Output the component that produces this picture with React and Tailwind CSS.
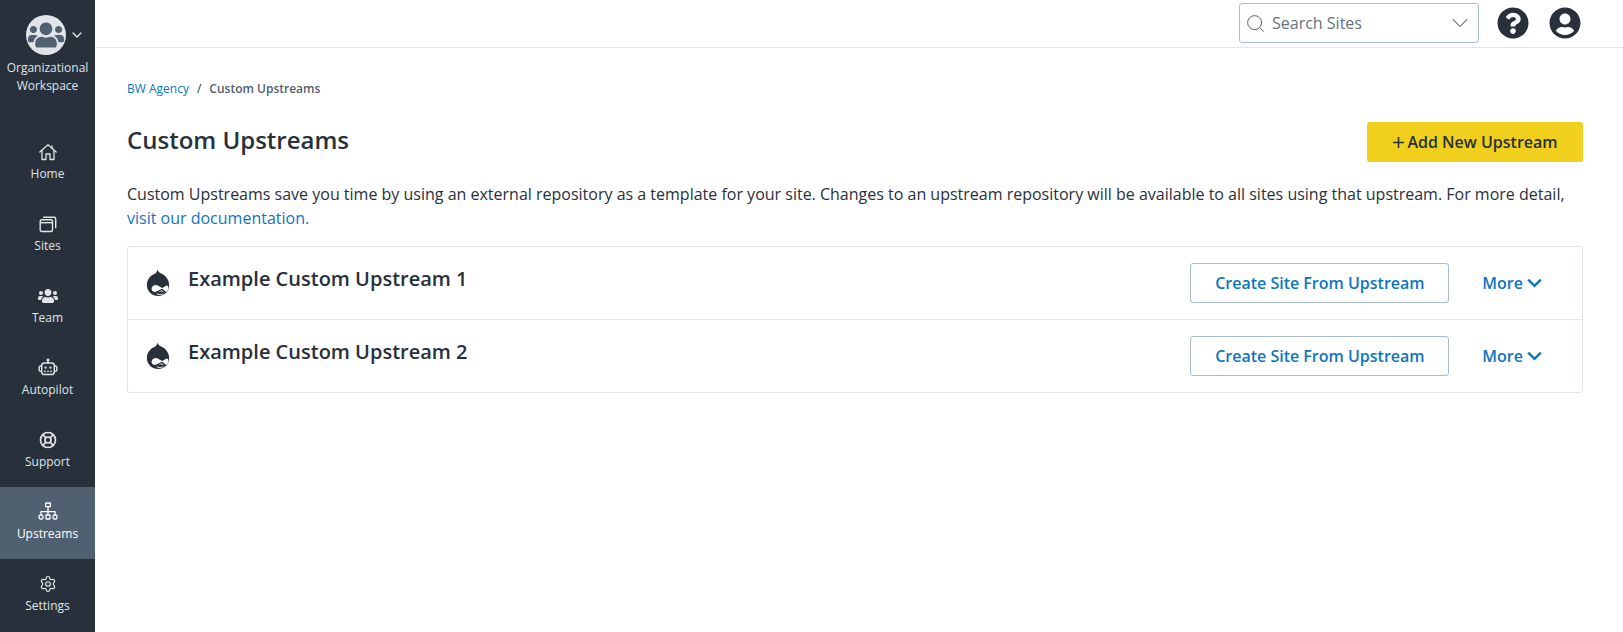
import React from "react";
import { FaDrupal, FaQuestionCircle, FaUserCircle, FaUsers } from "react-icons/fa";
import { Search, ChevronDown, Plus, LifeBuoy, Settings } from "lucide-react";

function SitesIcon() {
  return (
    <svg width="18" height="18" viewBox="0 0 18 18" fill="none" stroke="currentColor" strokeWidth="1.4">
      <rect x="1.2" y="4.7" width="12.3" height="11.8" rx="1.5" />
      <path d="M1.2 7.7h12.3" />
      <path d="M4.2 2.2h11a1.5 1.5 0 0 1 1.5 1.5v9.5" />
    </svg>
  );
}

function HomeIcon() {
  return (
    <svg width="18" height="18" viewBox="0 0 18 18" fill="none" stroke="currentColor" strokeWidth="1.3" strokeLinejoin="round" strokeLinecap="round">
      <path d="M0.8 9 9 1.8 17.2 9" />
      <path d="M3 7.5V16.5H7V11H11V16.5H15V7.5" />
      <path d="M13 3V5" />
    </svg>
  );
}

function BotIcon() {
  return (
    <svg width="20" height="20" viewBox="0 0 20 20" fill="none" stroke="currentColor" strokeWidth="1.4">
      <path d="M10 2v3" />
      <circle cx="10" cy="2" r="0.8" fill="currentColor" />
      <rect x="3.7" y="5" width="12.6" height="11.5" rx="2.6" />
      <path d="M3.7 8H2.6A1.4 1.4 0 0 0 1.2 9.4v2.6a1.4 1.4 0 0 0 1.4 1.4h1.1" />
      <path d="M16.3 8h1.1a1.4 1.4 0 0 1 1.4 1.4v2.6a1.4 1.4 0 0 1-1.4 1.4h-1.1" />
      <rect x="6.6" y="8.6" width="2" height="2" fill="currentColor" stroke="none" />
      <rect x="11.4" y="8.6" width="2" height="2" fill="currentColor" stroke="none" />
      <rect x="6.2" y="12.6" width="1.6" height="1.6" fill="currentColor" stroke="none" />
      <rect x="9.2" y="12.6" width="1.6" height="1.6" fill="currentColor" stroke="none" />
      <rect x="12.2" y="12.6" width="1.6" height="1.6" fill="currentColor" stroke="none" />
    </svg>
  );
}

function NetworkIcon() {
  return (
    <svg width="20" height="20" viewBox="0 0 20 20" fill="none" stroke="currentColor" strokeWidth="1.3">
      <rect x="7.6" y="1" width="4.8" height="3.6" rx="0.6" />
      <path d="M10 4.6v8" />
      <path d="M3 12.5V9.6h14v2.9" />
      <rect x="1" y="13" width="4" height="4" rx="1.6" />
      <rect x="8" y="13" width="4" height="4" rx="0.4" />
      <rect x="15" y="13" width="4" height="4" rx="1.6" />
    </svg>
  );
}

function Chev() {
  return (
    <svg width="15" height="10" viewBox="0 0 15 10" fill="none" stroke="currentColor" strokeWidth="2.4" className="ml-[4px]">
      <path d="M1.2 1.6 7.5 7.8 13.8 1.6" />
    </svg>
  );
}

const nav = [
  { label: "Home", icon: <HomeIcon /> },
  { label: "Sites", icon: <SitesIcon /> },
  { label: "Team", icon: <FaUsers size={20} /> },
  { label: "Autopilot", icon: <BotIcon /> },
  { label: "Support", icon: <LifeBuoy size={18} strokeWidth={2.2} /> },
  { label: "Upstreams", icon: <NetworkIcon />, active: true },
  { label: "Settings", icon: <Settings size={18} strokeWidth={1.6} /> },
];

function Row({ name }) {
  return (
    <div className="flex h-[73px] items-center pl-[17px] pr-[40px] border-b border-[#dfe5e8] last:border-b-0 last:h-[72px]">
      <FaDrupal className="text-[#28303b] w-[26px] h-[30px]" />
      <div className="ml-[17px] text-[20px] font-semibold text-[#28303b] leading-[24px] mb-[9px] flex-1">{name}</div>
      <button className="w-[259px] h-[40px] border border-[#a9bccd] rounded-[3px] text-[#0f75bc] text-[16px] font-semibold">
        Create Site From Upstream
      </button>
      <div className="ml-[33px] flex items-center text-[#0f75bc] text-[16px] font-semibold">
        More
        <Chev />
      </div>
    </div>
  );
}

export default function App() {
  return (
    <div className="flex h-[632px] bg-white overflow-hidden font-['Open_Sans',sans-serif] text-[#28303b]">
      <aside className="w-[95px] shrink-0 bg-[#28303b] flex flex-col text-[#dfe5e8]">
        <div className="h-[127px] flex flex-col items-center pt-[15px]">
          <div className="flex items-center pl-[16px]">
            <div className="w-[40px] h-[40px] rounded-full bg-[#dfe5e8] flex items-center justify-center">
              <FaUsers className="text-[#516070] w-[36px] h-[32px]" />
            </div>
            <ChevronDown size={16} strokeWidth={2} className="ml-[3px] -mt-[1px] text-[#dfe5e8]" />
          </div>
          <div className="mt-[4px] text-[12px] leading-[18px] text-center">
            Organizational
            <br />
            Workspace
          </div>
        </div>
        {nav.map((n) => (
          <div
            key={n.label}
            className={`h-[72px] flex flex-col items-center pt-[15px] ${n.active ? "bg-[#516070] text-white font-medium" : ""}`}
          >
            <div className="h-[20px] flex items-center justify-center">{n.icon}</div>
            <div className="mt-[3px] text-[12px] leading-[18px]">{n.label}</div>
          </div>
        ))}
      </aside>
      <main className="flex-1 min-w-0">
        <header className="h-[48px] border-b border-[#dfe5e8] flex items-start justify-end pt-[3px] pr-[42px]">
          <div className="w-[240px] h-[40px] border border-[#a9bccd] rounded-[3px] flex items-center pl-[5px] pr-[4px]">
            <Search size={21} strokeWidth={1.1} className="text-[#516070]" />
            <span className="ml-[6px] flex-1 text-[16px] text-[#637282]">Search Sites</span>
            <ChevronDown size={28} strokeWidth={0.9} className="text-[#516070]" />
          </div>
          <FaQuestionCircle className="ml-[18px] mt-[4px] w-[32px] h-[32px] text-[#28303b]" />
          <FaUserCircle className="ml-[20px] mt-[4px] w-[32px] h-[32px] text-[#28303b]" />
        </header>
        <div className="pl-[32px] pr-[40px]">
          <div className="pt-[32px] text-[12px] leading-[18px] flex">
            <span className="text-[#0f75bc]">BW Agency</span>
            <span className="mx-[8px] text-[#28303b]">/</span>
            <span className="font-semibold text-[#516070]">Custom Upstreams</span>
          </div>
          <div className="mt-[24px] flex items-center justify-between h-[40px]">
            <h1 className="text-[24px] font-semibold leading-[32px] text-[#28303b] -mt-[5px]">Custom Upstreams</h1>
            <button className="w-[216px] h-[40px] bg-[#f0d01c] rounded-[3px] flex items-center justify-center pr-[2px] text-[16px] font-semibold text-[#28303b]">
              <Plus size={17} strokeWidth={2.2} />
              Add New Upstream
            </button>
          </div>
          <p className="mt-[20px] text-[16px] leading-[24px] text-[#28303b]">
            Custom Upstreams save you time by using an external repository as a template for your site. Changes to an upstream repository will be available to all sites using that upstream. For more detail,{" "}
            <span className="text-[#0f75bc]">visit our documentation.</span>
          </p>
          <div className="mt-[16px] border border-[#dfe5e8] rounded-[3px]">
            <Row name="Example Custom Upstream 1" />
            <Row name="Example Custom Upstream 2" />
          </div>
        </div>
      </main>
    </div>
  );
}
